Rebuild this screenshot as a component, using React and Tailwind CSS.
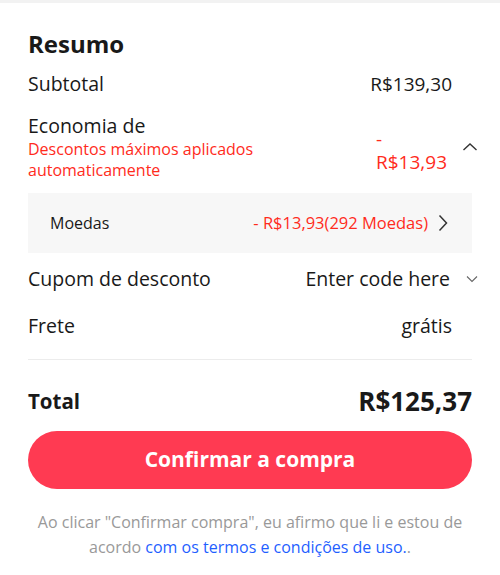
import React from "react";

const ChevronUp = () => (
  <svg width="16" height="10" viewBox="0 0 16 10" fill="none" stroke="#333" strokeWidth="1.4">
    <path d="M1.5 8 L8 2 L14.5 8" />
  </svg>
);

const ChevronRight = () => (
  <svg width="10" height="18" viewBox="0 0 10 18" fill="none" stroke="#333" strokeWidth="1.5">
    <path d="M1.5 1.5 L8.5 9 L1.5 16.5" />
  </svg>
);

const ChevronDown = () => (
  <svg width="12" height="8" viewBox="0 0 12 8" fill="none" stroke="#666" strokeWidth="1.1">
    <path d="M1 1.5 L6 6.5 L11 1.5" />
  </svg>
);

export default function App() {
  return (
    <div className="w-[500px] h-[575px] bg-white overflow-hidden font-['Open_Sans',sans-serif] text-[#191919]">
      <div className="h-[3px] bg-[#f2f2f2]" />
      <div className="px-[28px] pt-[25px]">
        <h2 className="text-[24px] font-bold leading-[32px]">Resumo</h2>

        <div className="flex items-center justify-between mt-[11px] h-[26px] pr-[20px]">
          <span className="text-[19.5px]">Subtotal</span>
          <span className="text-[19px]">R$139,30</span>
        </div>

        <div className="flex justify-between mt-[16px]">
          <div>
            <div className="text-[19.5px] leading-[26px]">Economia de</div>
            <div className="text-[16px] leading-[21px] text-[#ff2b1c]">
              Descontos máximos aplicados
              <br />
              automaticamente
            </div>
          </div>
          <div className="flex items-center gap-[15px] -mr-[6px]">
            <div className="text-[19px] leading-[23px] text-[#ff2b1c] mt-[8px]">
              <div>-</div>
              <div>R$13,93</div>
            </div>
            <ChevronUp />
          </div>
        </div>

        <div className="mt-[12px] h-[60px] bg-[#f7f7f7] flex items-center justify-between pl-[22px] pr-[24px]">
          <span className="text-[16px]">Moedas</span>
          <div className="flex items-center gap-[10px]">
            <span className="text-[16.5px] text-[#ff2b1c]">- R$13,93(292 Moedas)</span>
            <ChevronRight />
          </div>
        </div>

        <div className="flex items-center justify-between mt-[13px] h-[26px]">
          <span className="text-[19.5px]">Cupom de desconto</span>
          <div className="flex items-center gap-[16px] -mr-[6px]">
            <span className="text-[19.5px]">Enter code here</span>
            <ChevronDown />
          </div>
        </div>

        <div className="flex items-center justify-between mt-[21px] h-[26px] pr-[20px]">
          <span className="text-[19.5px]">Frete</span>
          <span className="text-[19.5px]">grátis</span>
        </div>

        <div className="mt-[20px] border-t border-[#ececec]" />

        <div className="flex items-center justify-between mt-[23px] h-[36px]">
          <span className="text-[20.5px] font-bold">Total</span>
          <span className="text-[26px] font-bold">R$125,37</span>
        </div>

        <button className="mt-[12px] w-full h-[58px] rounded-full bg-[#ff3a52] text-white text-[21px] font-bold">
          Confirmar a compra
        </button>

        <p className="mt-[21px] text-center text-[16px] leading-[25px] text-[#999999]">
          Ao clicar "Confirmar compra", eu afirmo que li e estou de acordo{" "}
          <span className="text-[#1f5fff]">com os termos e condições de uso.</span>.
        </p>
      </div>
    </div>
  );
}
